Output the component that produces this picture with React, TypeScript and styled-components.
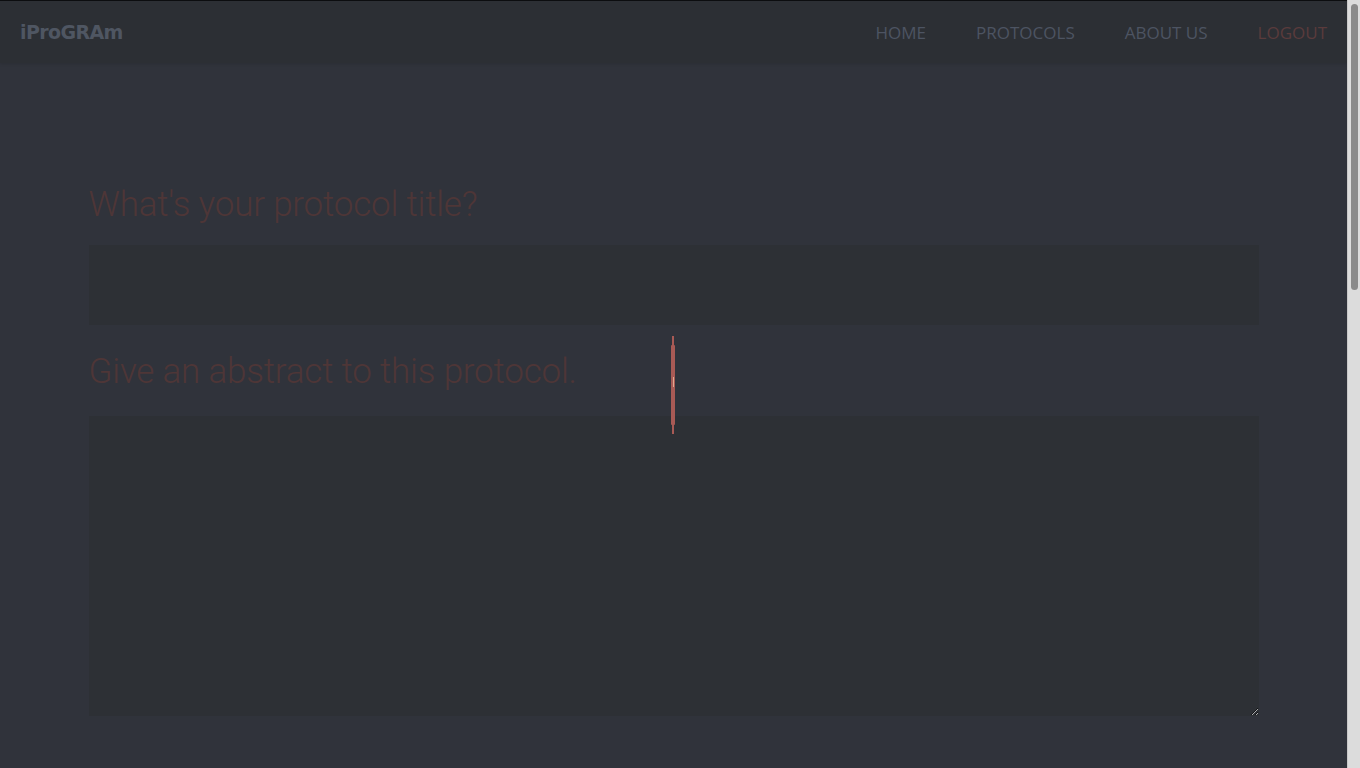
import React from 'react';
import styled, { createGlobalStyle } from 'styled-components';

const GlobalStyle = createGlobalStyle`
    html, body {
        margin: 0;
        padding: 0;
        height: 100%;
        overflow: hidden;
        background-color: #30333b;
    }
    body {
        font-family: "Open Sans", "DejaVu Sans", sans-serif;
    }
`;

const Viewport = styled.div`
    box-sizing: border-box;
    width: calc(100% - 13px);
    height: 100vh;
    overflow-y: auto;
    border-top: 1px solid #0c0d0f;
    background-color: #30333b;
    scrollbar-width: none;

    &::-webkit-scrollbar {
        display: none;
    }
`;

const ScrollTrack = styled.div`
    position: fixed;
    top: 0;
    right: 0;
    width: 13px;
    height: 100vh;
    background-color: #dcdcdc;
    border-left: 1px solid #c8c8c8;
    box-sizing: border-box;
`;

const ScrollThumb = styled.div`
    margin: 4px 2px 0 3px;
    height: 286px;
    border-radius: 4px;
    background-color: #8a8a8a;
`;

const NavBar = styled.nav`
    display: flex;
    align-items: center;
    justify-content: space-between;
    height: 62px;
    padding: 0 20px;
    background-color: #2c2f34;
    box-shadow: 0 1px 3px rgba(0, 0, 0, 0.12);
`;

const Logo = styled.a`
    font-family: "DejaVu Sans", sans-serif;
    font-weight: bold;
    font-size: 19px;
    letter-spacing: -0.6px;
    color: #4f5662;
    text-decoration: none;
`;

const NavLinks = styled.ul`
    display: flex;
    align-items: center;
    gap: 50px;
    margin: 0;
    padding: 0;
    list-style: none;
`;

const NavLink = styled.a<{ danger?: boolean }>`
    font-family: "Open Sans", sans-serif;
    font-size: 17px;
    text-transform: uppercase;
    color: ${props => (props.danger ? '#5a3b3c' : '#4d5462')};
    text-decoration: none;
`;

const Main = styled.main`
    position: relative;
    width: 1170px;
    margin: 0 auto;
    padding: 118px 0 1300px;
`;

const Question = styled.h2<{ spacing?: number }>`
    margin: 0 0 ${props => props.spacing ?? 16}px;
    font-family: "Roboto", sans-serif;
    font-weight: 300;
    font-size: 35px;
    line-height: 48px;
    letter-spacing: -0.2px;
    color: #4e3637;
`;

const TitleInput = styled.input`
    display: block;
    box-sizing: border-box;
    width: 100%;
    height: 80px;
    margin: 0 0 23px;
    padding: 0 20px;
    border: none;
    outline: none;
    background-color: #2d3035;
    font-size: 20px;
    color: #8a8f99;
`;

const AbstractArea = styled.textarea`
    display: block;
    box-sizing: border-box;
    width: 100%;
    height: 300px;
    margin: 0;
    padding: 20px;
    border: none;
    outline: none;
    background-color: #2d3035;
    font-size: 18px;
    color: #8a8f99;
`;

const Slider = styled.div`
    position: absolute;
    left: 582px;
    top: 282px;
    width: 4px;
    height: 80px;
    background-color: #a85a55;
    border-radius: 1px;

    &::before,
    &::after {
        content: '';
        position: absolute;
        left: 1px;
        width: 2px;
        height: 9px;
        background-color: #a85a55;
    }
    &::before { top: -9px; }
    &::after { bottom: -9px; }
`;

const SliderMark = styled.span`
    position: absolute;
    left: 2px;
    top: 32px;
    width: 1px;
    height: 10px;
    background-color: #e2a78f;
`;

const App: React.FC = () => {
    return (
        <>
            <GlobalStyle />
            <Viewport>
                <NavBar>
                    <Logo href="#">iProGRAm</Logo>
                    <NavLinks>
                        <li><NavLink href="#">Home</NavLink></li>
                        <li><NavLink href="#">Protocols</NavLink></li>
                        <li><NavLink href="#">About us</NavLink></li>
                        <li><NavLink href="#" danger>Logout</NavLink></li>
                    </NavLinks>
                </NavBar>
                <Main>
                    <Question>What's your protocol title?</Question>
                    <TitleInput type="text" />
                    <Question spacing={20}>Give an abstract to this protocol.</Question>
                    <AbstractArea />
                    <Slider>
                        <SliderMark />
                    </Slider>
                </Main>
            </Viewport>
            <ScrollTrack>
                <ScrollThumb />
            </ScrollTrack>
        </>
    );
};

export default App;
